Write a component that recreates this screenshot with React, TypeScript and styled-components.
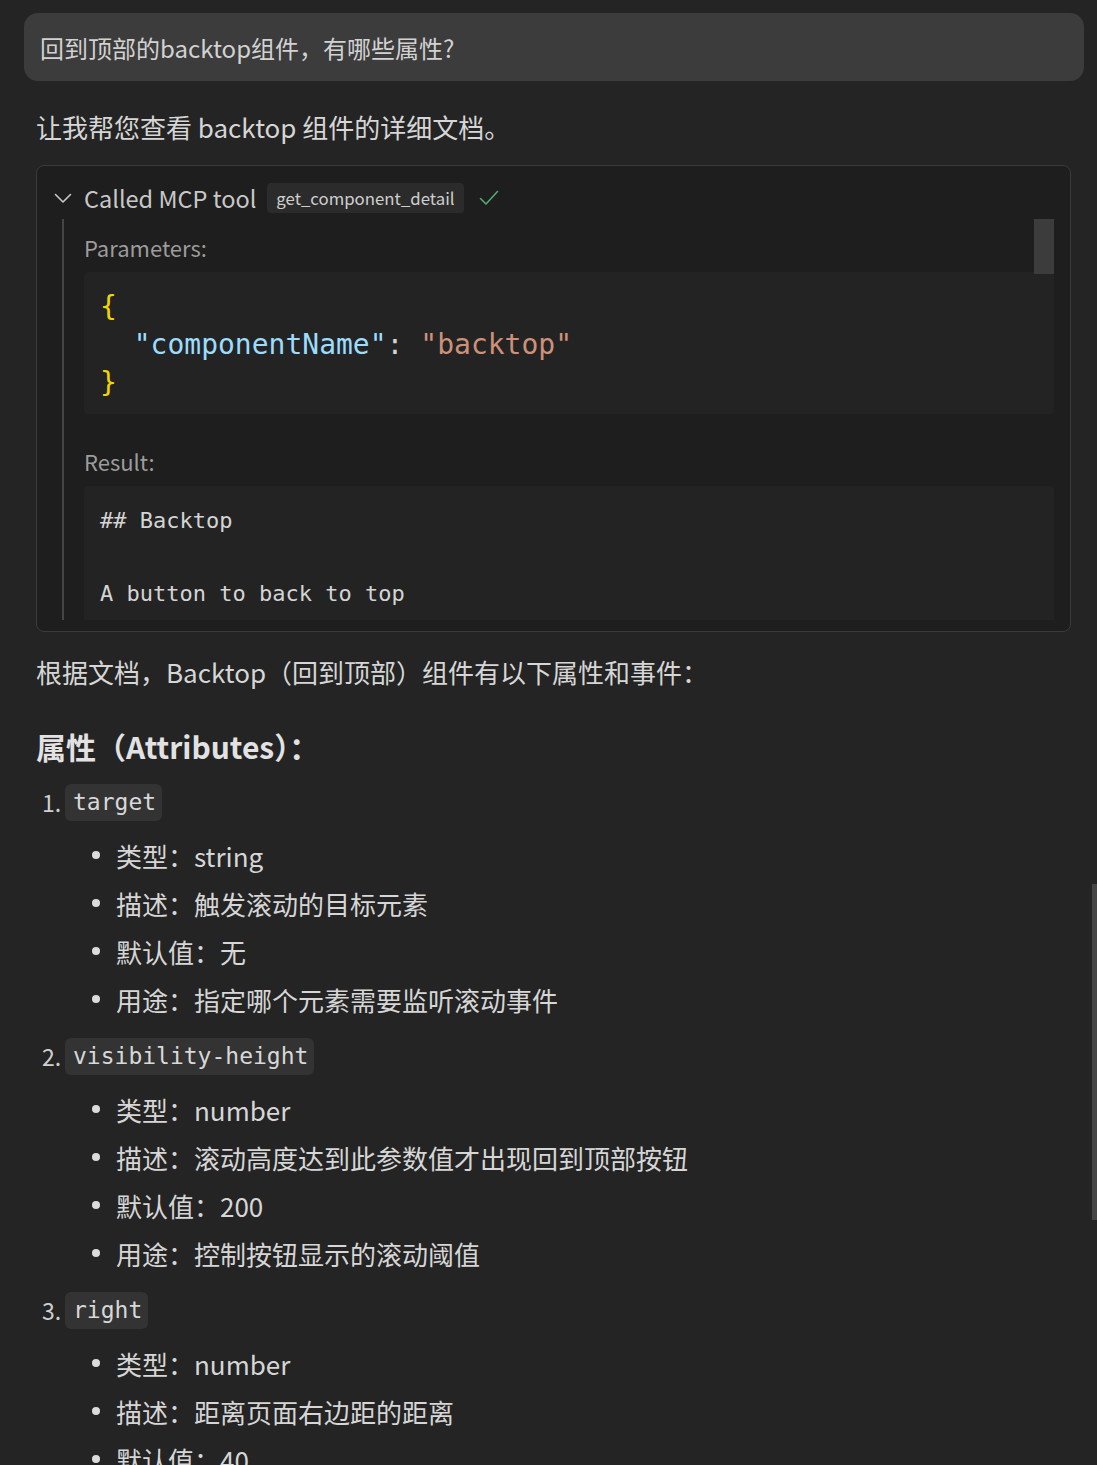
import React from "react";
import styled, { createGlobalStyle } from "styled-components";

const GlobalStyle = createGlobalStyle`
  html, body {
    margin: 0;
    padding: 0;
    background: #242424;
    overflow: hidden;
  }
  body {
    font-family: "Noto Sans CJK SC", "Noto Sans", sans-serif;
    color: #d6d6d6;
  }
`;

const MONO = `"DejaVu Sans Mono", "Liberation Mono", monospace`;

const Page = styled.div`
  height: 1465px;
  box-sizing: border-box;
  padding: 13px 13px 0 24px;
  overflow: hidden;
`;

const UserBubble = styled.div`
  height: 68px;
  display: flex;
  align-items: center;
  padding: 0 16px;
  border-radius: 14px;
  background: #3c3c3c;
  font-size: 24px;
  color: #d2d2d2;
`;

const Answer = styled.div`
  padding: 0 13px 0 12px;
`;

const Para = styled.p<{ $top: number }>`
  margin: ${(p) => p.$top}px 0 0;
  font-size: 26px;
  line-height: 36px;
  color: #d6d6d6;
`;

const ToolBox = styled.div`
  margin-top: 20px;
  border: 1px solid #3b3b3b;
  border-radius: 8px;
  background: #1e1e1e;
  padding: 16px 16px 11px 0;
`;

const ToolHeader = styled.div`
  display: flex;
  align-items: center;
  height: 32px;
  padding-left: 16px;
  font-size: 23.5px;
  color: #c8c8c8;
`;

const HeaderLabel = styled.span`
  margin-left: 11px;
`;

const ToolBadge = styled.span`
  margin-left: 11px;
  height: 30px;
  display: inline-flex;
  align-items: center;
  padding: 0 9px;
  border-radius: 4px;
  background: #2b2b2b;
  font-size: 16.8px;
  color: #cfcfcf;
`;

const CheckWrap = styled.span`
  margin-left: 14px;
  display: inline-flex;
`;

const ToolBody = styled.div`
  position: relative;
  margin: 5px 0 0 25px;
  height: 401px;
  overflow: hidden;
  border-left: 2px solid #454545;
  padding: 13px 0 0 20px;
  box-sizing: border-box;
`;

const ScrollThumb = styled.div`
  position: absolute;
  top: 0;
  right: 0;
  width: 20px;
  height: 55px;
  background: #3c3c3c;
`;

const SectionLabel = styled.div<{ $top: number }>`
  margin-top: ${(p) => p.$top}px;
  font-size: 22px;
  line-height: 30px;
  color: #9c9c9c;
`;

const CodeBlock = styled.pre<{ $size: number; $line: number; $pad: string }>`
  margin: 10px 0 0;
  padding: ${(p) => p.$pad};
  background: #232323;
  border-radius: 4px;
  font-family: ${MONO};
  font-size: ${(p) => p.$size}px;
  line-height: ${(p) => p.$line}px;
  color: #d4d4d4;
  white-space: pre;
`;

const Brace = styled.span`
  color: #f1d700;
`;

const JsonKey = styled.span`
  color: #9cdcfe;
`;

const JsonString = styled.span`
  color: #ce9178;
`;

const Heading = styled.h3`
  margin: 36px 0 0;
  font-size: 30px;
  line-height: 40px;
  font-weight: 700;
  color: #e2e2e2;
`;

const AttrList = styled.div`
  display: flex;
  flex-direction: column;
`;

const AttrItem = styled.div<{ $top: number }>`
  margin-top: ${(p) => p.$top}px;
`;

const AttrTitle = styled.div`
  display: flex;
  align-items: center;
  height: 40px;
  padding-left: 6px;
  font-size: 23px;
  color: #cfcfcf;
`;

const AttrNum = styled.span`
  width: 23px;
`;

const InlineCode = styled.code`
  display: inline-flex;
  align-items: center;
  height: 37px;
  padding: 0 6px 0 8px;
  border-radius: 6px;
  background: #333333;
  font-family: ${MONO};
  font-size: 23px;
  color: #d8d8d8;
`;

const Bullets = styled.ul`
  list-style: none;
  margin: 9px 0 0;
  padding: 0;
`;

const Bullet = styled.li`
  display: flex;
  align-items: center;
  height: 48px;
  padding-left: 56px;
  font-size: 26px;
  color: #d6d6d6;

  &::before {
    content: "";
    flex: none;
    width: 8px;
    height: 8px;
    border-radius: 50%;
    background: #dcdcdc;
    margin-right: 16px;
  }
`;

const PageScrollbar = styled.div`
  position: fixed;
  top: 884px;
  right: 0;
  width: 5px;
  height: 336px;
  background: #454545;
`;

const ChevronDown = () => (
  <svg width="20" height="20" viewBox="0 0 20 20" fill="none">
    <path d="M2.5 6.5 L10 14 L17.5 6.5" stroke="#c8c8c8" strokeWidth="1.6" strokeLinecap="round" strokeLinejoin="round" />
  </svg>
);

const CheckIcon = () => (
  <svg width="22" height="22" viewBox="0 0 22 22" fill="none">
    <path d="M2.5 11.5 L8 17 L19.5 4.5" stroke="#58a872" strokeWidth="1.6" strokeLinecap="round" strokeLinejoin="round" />
  </svg>
);

type Attr = {
  name: string;
  rows: string[];
};

const attributes: Attr[] = [
  {
    name: "target",
    rows: ["类型：string", "描述：触发滚动的目标元素", "默认值：无", "用途：指定哪个元素需要监听滚动事件"],
  },
  {
    name: "visibility-height",
    rows: ["类型：number", "描述：滚动高度达到此参数值才出现回到顶部按钮", "默认值：200", "用途：控制按钮显示的滚动阈值"],
  },
  {
    name: "right",
    rows: ["类型：number", "描述：距离页面右边距的距离", "默认值：40"],
  },
];

export default function App() {
  return (
    <>
      <GlobalStyle />
      <Page>
        <UserBubble>回到顶部的backtop组件，有哪些属性?</UserBubble>
        <Answer>
          <Para $top={28}>让我帮您查看 backtop 组件的详细文档。</Para>

          <ToolBox>
            <ToolHeader>
              <ChevronDown />
              <HeaderLabel>Called MCP tool</HeaderLabel>
              <ToolBadge>get_component_detail</ToolBadge>
              <CheckWrap>
                <CheckIcon />
              </CheckWrap>
            </ToolHeader>
            <ToolBody>
              <ScrollThumb />
              <SectionLabel $top={0}>Parameters:</SectionLabel>
              <CodeBlock $size={28} $line={38} $pad="16px 16px 12px">
                <Brace>{"{"}</Brace>
                {"\n  "}
                <JsonKey>"componentName"</JsonKey>
                {": "}
                <JsonString>"backtop"</JsonString>
                {"\n"}
                <Brace>{"}"}</Brace>
              </CodeBlock>
              <SectionLabel $top={32}>Result:</SectionLabel>
              <CodeBlock $size={22} $line={36.5} $pad="17px 16px 16px">
                {"## Backtop\n\nA button to back to top\n"}
              </CodeBlock>
            </ToolBody>
          </ToolBox>

          <Para $top={22}>根据文档，Backtop（回到顶部）组件有以下属性和事件：</Para>

          <Heading>属性（Attributes）：</Heading>

          <AttrList>
            {attributes.map((attr, i) => (
              <AttrItem key={attr.name} $top={i === 0 ? 16 : 13}>
                <AttrTitle>
                  <AttrNum>{i + 1}.</AttrNum>
                  <InlineCode>{attr.name}</InlineCode>
                </AttrTitle>
                <Bullets>
                  {attr.rows.map((row) => (
                    <Bullet key={row}>{row}</Bullet>
                  ))}
                </Bullets>
              </AttrItem>
            ))}
          </AttrList>
        </Answer>
        <PageScrollbar />
      </Page>
    </>
  );
}
